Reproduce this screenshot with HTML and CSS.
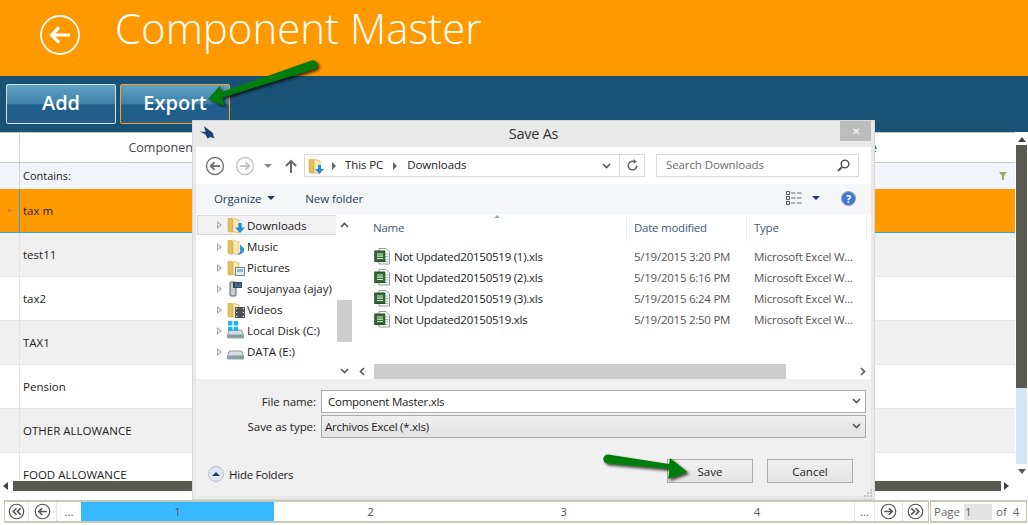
FILE: index.html
```html
<!DOCTYPE html>
<html lang="en">
<head>
<meta charset="utf-8">
<title>Component Master</title>
<link rel="stylesheet" href="styles.css">
</head>
<body>
<svg class="defs" width="0" height="0">
  <defs>
    <symbol id="folder" viewBox="0 0 16 16">
      <path d="M1 1.500h4l1 1v12.500H2l-1-1z" fill="#e2bf5c" stroke="#c9a84a" stroke-width=".6"/>
      <path d="M6 1 12 3v12.500l-6-.5z" fill="#f8e8ae" stroke="#d0b057" stroke-width=".6"/>
    </symbol>
    <symbol id="xls" viewBox="0 0 17 17">
      <path d="M5 .5h7l3.500 3.500v12H5z" fill="#fff" stroke="#8f9a9a"/>
      <path d="M11 6h3.500M11 8.500h3.500M11 11h3.500M11 13.500h3.500" stroke="#9aa" stroke-width=".8"/>
      <rect x=".8" y="3" width="10" height="10.500" fill="#2f6b2f" stroke="#1f4d1f"/>
      <path d="M3 6h6M3 8.200h6M3 10.500h6" stroke="#dfeedd" stroke-width="1.200"/>
    </symbol>
    <symbol id="disk" viewBox="0 0 17 10">
      <path d="M2.500 1h12L16.500 6v3H.5V6z" fill="#d8dde2" stroke="#80878c" stroke-width=".8"/>
      <rect x="1" y="5.500" width="15" height="3.200" fill="#8a9aa4"/>
      <rect x="12" y="6.300" width="2.500" height="1.500" fill="#4fc04f"/>
    </symbol>
    <symbol id="circleL" viewBox="0 0 20 20">
      <circle cx="10" cy="10" r="8.500" fill="#fff" stroke="currentColor" stroke-width="1.400"/>
      <path d="M15 10H6M9.500 6.200 5.700 10l3.800 3.800" fill="none" stroke="currentColor" stroke-width="2"/>
    </symbol>
    <symbol id="circleR" viewBox="0 0 20 20">
      <circle cx="10" cy="10" r="8.500" fill="#fff" stroke="currentColor" stroke-width="1.400"/>
      <path d="M5 10h9M10.500 6.200l3.800 3.800-3.800 3.800" fill="none" stroke="currentColor" stroke-width="2"/>
    </symbol>
    <symbol id="circleLL" viewBox="0 0 20 20">
      <circle cx="10" cy="10" r="8.500" fill="#fff" stroke="currentColor" stroke-width="1.400"/>
      <path d="M10 6.200 6.200 10l3.800 3.800M15 6.200 11.200 10l3.800 3.800" fill="none" stroke="currentColor" stroke-width="2"/>
    </symbol>
    <symbol id="circleRR" viewBox="0 0 20 20">
      <circle cx="10" cy="10" r="8.500" fill="#fff" stroke="currentColor" stroke-width="1.400"/>
      <path d="M5 6.200 8.800 10 5 13.800M10 6.200l3.800 3.800-3.800 3.800" fill="none" stroke="currentColor" stroke-width="2"/>
    </symbol>
  </defs>
</svg>

<header class="top">
  <svg class="back" width="40" height="40" viewBox="0 0 40 40"><circle cx="20" cy="20" r="19" fill="none" stroke="#fff" stroke-width="1.800"/><path d="M30 20H11M19 12.500 11.500 20l7.500 7.500" fill="none" stroke="#fff" stroke-width="3.200"/></svg>
  <h1 class="title">Component Master</h1>
</header>

<nav class="bar">
  <button class="tbtn">Add</button>
  <button class="tbtn tbtn-on">Export</button>
</nav>

<section class="grid">
  <div class="grid-main">
    <div class="ghead">
      <div class="gi"></div>
      <div class="gh c1">Component Name</div>
      <div class="gh c2">Description</div>
      <div class="gh c3">Component Type</div>
    </div>
    <div class="gfilter">
      <div class="gi"></div>
      <div class="fcell">Contains:</div>
      <svg class="funnel" width="8" height="8" viewBox="0 0 8 8"><path d="M0 0h8L5 4v4H3V4z" fill="#9aa86a"/></svg>
    </div>
    <div class="grows">
      <div class="row sel"><div class="gi"><span class="dot"></span></div><div class="cell">tax m</div></div>
      <div class="row alt"><div class="gi"></div><div class="cell">test11</div></div>
      <div class="row"><div class="gi"></div><div class="cell">tax2</div></div>
      <div class="row alt"><div class="gi"></div><div class="cell">TAX1</div></div>
      <div class="row"><div class="gi"></div><div class="cell">Pension</div></div>
      <div class="row alt"><div class="gi"></div><div class="cell">OTHER ALLOWANCE</div></div>
      <div class="row"><div class="gi"></div><div class="cell">FOOD ALLOWANCE</div></div>
    </div>
    <div class="hscroll">
      <span class="tri tri-l"></span>
      <div class="hthumb"></div>
      <span class="tri tri-r"></span>
    </div>
  </div>
  <div class="vscroll">
    <span class="tri tri-u"></span>
    <div class="vthumb"></div>
    <div class="vtrack"></div>
    <span class="tri tri-d"></span>
  </div>
</section>

<footer class="pager">
  <div class="pages">
    <div class="pg pg-first"><svg class="pic" width="17" height="17"><use href="#circleLL"/></svg></div>
    <div class="pg pg-i"><svg class="pic" width="17" height="17"><use href="#circleL"/></svg></div>
    <div class="pg pg-m">...</div>
    <div class="pg pg-n on">1</div>
    <div class="pg pg-n">2</div>
    <div class="pg pg-n">3</div>
    <div class="pg pg-n pg-edge">4</div>
    <div class="pg pg-m2">...</div>
    <div class="pg pg-i"><svg class="pic" width="17" height="17"><use href="#circleR"/></svg></div>
    <div class="pg pg-last"><svg class="pic" width="17" height="17"><use href="#circleRR"/></svg></div>
  </div>
  <div class="pageinfo"><span>Page</span><span class="pinput">1</span><span>of</span><span class="ptotal">4</span></div>
</footer>

<div class="dialog">
  <div class="dtitle">
    <svg class="bird" width="17" height="15" viewBox="0 0 17 15"><path d="M1 6.500 6.500 7 5 1l5 4 4 3 .5 3 1 2.500-4-1.500-3 1.500-2-4z" fill="#1f3f77"/></svg>
    <span class="dtext">Save As</span>
    <span class="close">✕</span>
  </div>
  <div class="dinner">
    <div class="dnav">
      <svg class="nav-back" width="20" height="20"><use href="#circleL"/></svg>
      <svg class="nav-fwd" width="20" height="20"><use href="#circleR"/></svg>
      <span class="tri tri-hist"></span>
      <svg class="nav-up" width="12" height="14" viewBox="0 0 12 14"><path d="M6 14V2M1 7l5-5 5 5" fill="none" stroke="#6a6a6a" stroke-width="2"/></svg>
      <div class="addr">
        <svg class="ic16" width="16" height="16"><use href="#folder"/></svg>
        <svg class="ovarrow" width="9" height="9" viewBox="0 0 9 9"><path d="M3 0h3v4h3L4.500 9 0 4h3z" fill="#1f8fe8"/></svg>
        <span class="tri tri-crumb"></span>
        <span class="crumb">This PC</span>
        <span class="tri tri-crumb"></span>
        <span class="crumb">Downloads</span>
        <span class="grow"></span>
        <svg class="chev" width="9" height="6" viewBox="0 0 9 6"><path d="M1 1l3.500 3.500L8 1" fill="none" stroke="#555" stroke-width="1.600"/></svg>
        <span class="refresh"><svg width="13" height="13" viewBox="0 0 13 13"><path d="M10.800 6.500a4.300 4.300 0 1 1-2-3.600" fill="none" stroke="#666" stroke-width="1.500"/><path d="M7.500 0l3.500 2.800-3.500 1.700z" fill="#666"/></svg></span>
      </div>
      <div class="search">
        <span>Search Downloads</span>
        <svg width="13" height="13" viewBox="0 0 13 13"><circle cx="8" cy="5" r="3.800" fill="none" stroke="#555" stroke-width="1.500"/><path d="M5 8l-4 4" stroke="#555" stroke-width="2"/></svg>
      </div>
    </div>
    <div class="dtools">
      <span class="org">Organize</span><span class="tri tri-tool"></span>
      <span class="newf">New folder</span>
      <span class="grow"></span>
      <svg class="views" width="16" height="14" viewBox="0 0 16 14"><path d="M.5.500h3v3h-3zM.5 5.500h3v3h-3zM.5 10.500h3v3h-3z" fill="none" stroke="#4a5a70"/><path d="M5 2h4.500M11 2h4.500M5 7h4.500M11 7h4.500M5 12h4.500M11 12h4.500" stroke="#5a6a80"/></svg>
      <span class="tri tri-tool tri-views"></span>
      <svg class="help" width="15" height="15" viewBox="0 0 15 15"><circle cx="7.500" cy="7.500" r="7" fill="#3f78d0" stroke="#8aa0c0"/><text x="7.500" y="11.500" text-anchor="middle" class="helpq">?</text></svg>
    </div>
    <div class="dbody">
      <div class="tree">
        <div class="tlist">
          <div class="ti ti-sel"><span class="exp"></span><span class="ticon"><svg width="16" height="16"><use href="#folder"/></svg><svg class="ovarrow2" width="10" height="10" viewBox="0 0 9 9"><path d="M3 0h3v4h3L4.500 9 0 4h3z" fill="#1f8fe8"/></svg></span>Downloads</div>
          <div class="ti"><span class="exp"></span><span class="ticon"><svg width="16" height="16"><use href="#folder"/></svg><svg class="ovarrow2" width="9" height="11" viewBox="0 0 9 11"><path d="M4 0c1 3 5 3 4 7-1 3-5 4-7 3 2 0 4-2 3-5z" fill="#2f8fd8"/></svg></span>Music</div>
          <div class="ti"><span class="exp"></span><span class="ticon"><svg width="16" height="16"><use href="#folder"/></svg><svg class="ovarrow2" width="10" height="9" viewBox="0 0 10 9"><rect x=".5" y=".5" width="9" height="8" fill="#dfeaf2" stroke="#7a8a90"/><rect x="2" y="2" width="6" height="3" fill="#8fb8d0"/></svg></span>Pictures</div>
          <div class="ti"><span class="exp"></span><span class="ticon"><svg width="16" height="16" viewBox="0 0 16 16"><rect x="3" y="1" width="6" height="14" rx="1" fill="#c8ccd0" stroke="#5a6066"/><path d="M6 1h9v6H6z" fill="#3a4a55"/><path d="M8 3h2M12 3h2M8 5h6" stroke="#3fa0e0"/></svg></span>soujanyaa (ajay)</div>
          <div class="ti"><span class="exp"></span><span class="ticon"><svg width="16" height="16"><use href="#folder"/></svg><svg class="ovarrow2" width="10" height="11" viewBox="0 0 9 10"><rect width="9" height="10" fill="#4a5258"/><path d="M1 1.500h1M1 5h1M1 8.500h1M7 1.500h1M7 5h1M7 8.500h1" stroke="#fff"/></svg></span>Videos</div>
          <div class="ti"><span class="exp"></span><span class="ticon"><svg width="17" height="10" class="dsk"><use href="#disk"/></svg><svg class="win" width="10" height="10" viewBox="0 0 8 8"><path d="M0 0h3.500v3.500H0zM4.500 0H8v3.500H4.500zM0 4.500h3.500V8H0zM4.500 4.500H8V8H4.500z" fill="#19b5f0"/></svg></span>Local Disk (C:)</div>
          <div class="ti"><span class="exp"></span><span class="ticon"><svg width="17" height="10" class="dsk"><use href="#disk"/></svg></span>DATA (E:)</div>
        </div>
        <div class="tscroll">
          <svg class="sc-u" width="9" height="6" viewBox="0 0 9 6"><path d="M1 5l3.500-3.500L8 5" fill="none" stroke="#555" stroke-width="1.600"/></svg>
          <div class="tthumb"></div>
          <svg class="sc-d" width="9" height="6" viewBox="0 0 9 6"><path d="M1 1l3.500 3.500L8 1" fill="none" stroke="#555" stroke-width="1.600"/></svg>
        </div>
      </div>
      <div class="files">
        <div class="fhead">
          <span class="fh fh-name">Name</span><span class="fh fh-date">Date modified</span><span class="fh fh-type">Type</span>
          <span class="sortmark"></span>
        </div>
        <div class="flist">
          <div class="fr"><svg class="fi" width="17" height="17"><use href="#xls"/></svg><span class="fn">Not Updated20150519 (1).xls</span><span class="fd">5/19/2015 3:20 PM</span><span class="ft">Microsoft Excel W...</span></div>
          <div class="fr"><svg class="fi" width="17" height="17"><use href="#xls"/></svg><span class="fn">Not Updated20150519 (2).xls</span><span class="fd">5/19/2015 6:16 PM</span><span class="ft">Microsoft Excel W...</span></div>
          <div class="fr"><svg class="fi" width="17" height="17"><use href="#xls"/></svg><span class="fn">Not Updated20150519 (3).xls</span><span class="fd">5/19/2015 6:24 PM</span><span class="ft">Microsoft Excel W...</span></div>
          <div class="fr"><svg class="fi" width="17" height="17"><use href="#xls"/></svg><span class="fn">Not Updated20150519.xls</span><span class="fd">5/19/2015 2:50 PM</span><span class="ft">Microsoft Excel W...</span></div>
        </div>
        <div class="lscroll">
          <svg class="sc-h" width="6" height="9" viewBox="0 0 6 9"><path d="M5 1 1.500 4.500 5 8" fill="none" stroke="#555" stroke-width="1.600"/></svg>
          <div class="lthumb"></div>
          <svg class="sc-h" width="6" height="9" viewBox="0 0 6 9"><path d="M1 1l3.500 3.500L1 8" fill="none" stroke="#555" stroke-width="1.600"/></svg>
        </div>
      </div>
    </div>
    <div class="dform">
      <div class="frow">
        <label class="flabel">File name:</label>
        <div class="finput"><span>Component Master.xls</span><svg width="9" height="6" viewBox="0 0 9 6"><path d="M1 1l3.500 3.500L8 1" fill="none" stroke="#555" stroke-width="1.600"/></svg></div>
      </div>
      <div class="frow">
        <label class="flabel">Save as type:</label>
        <div class="finput fselect"><span>Archivos Excel (*.xls)</span><svg width="9" height="6" viewBox="0 0 9 6"><path d="M1 1l3.500 3.500L8 1" fill="none" stroke="#555" stroke-width="1.600"/></svg></div>
      </div>
      <div class="dfoot">
        <span class="hideic"><span class="tri tri-hide"></span></span>
        <span class="hidetxt">Hide Folders</span>
        <span class="grow"></span>
        <button class="dbtn">Save</button>
        <button class="dbtn">Cancel</button>
      </div>
    </div>
  </div>
  <svg class="grip" width="9" height="9" viewBox="0 0 9 9"><path d="M6 0h2v2H6zM3 3h2v2H3zM6 3h2v2H6zM0 6h2v2H0zM3 6h2v2H3zM6 6h2v2H6z" fill="#c4c4c4"/></svg>
</div>

<svg class="annot" width="1028" height="525" viewBox="0 0 1028 525">
  <defs>
    <filter id="sh" x="-20%" y="-50%" width="140%" height="200%"><feDropShadow dx="2" dy="2" stdDeviation="1.500" flood-color="#000" flood-opacity=".75"/></filter>
  </defs>
  <g filter="url(#sh)" fill="#047d0b">
    <path d="M311.500 60.500a4.500 4.500 0 0 1 3 8.500L222 97.500l2 8-16-6.500 12-13.500 1.500 6.500z"/>
    <path d="M608 454.500a4.500 4.500 0 0 0-.5 9l62 5.500-1.500 10 19.500-7-17.500-14-1 6z"/>
  </g>
</svg>
</body>
</html>
```

FILE: styles.css
```css
* { box-sizing: border-box; }
html, body { margin: 0; padding: 0; }
body {
  width: 1028px;
  height: 525px;
  overflow: hidden;
  background: #fff;
  font-family: "Open Sans", "Liberation Sans", sans-serif;
  font-size: 11.500px;
  color: #1c1c1c;
  position: relative;
}
.defs { position: absolute; }
.grow { flex: 1; }

.top { height: 76px; background: #ff9900; display: flex; align-items: flex-start; }
.back { margin: 15px 0 0 40px; }
.title { margin: 0 0 0 35px; font-size: 42px; line-height: 56px; font-weight: 300; color: #fff; white-space: nowrap; }

.bar { height: 56px; background: #1a5276; display: flex; gap: 4px; padding: 8px 0 0 6px; }
.tbtn {
  width: 110px; height: 40px; border: 1px solid #d8e4ea; border-radius: 2px; color: #fff;
  font: 600 20px "Open Sans", sans-serif;
  background: linear-gradient(#5fa3c4 0, #3f7fa8 50%, #1f5f8b 52%, #235f8a 100%);
  padding: 0 0 3px;
}
.tbtn-on { border-color: #ff9f1a; }

.grid { height: 366px; display: flex; }
.grid-main { width: 1015px; display: flex; flex-direction: column; padding-left: 0; }
.ghead { height: 31px; display: flex; border-top: 1px solid #c9c9ba; border-bottom: 1px solid #c9c9ba; }
.gi { width: 20px; flex: none; border-right: 1px solid #d4d4c8; display: flex; align-items: center; justify-content: center; }
.gh { display: flex; align-items: center; justify-content: center; font-size: 12.500px; color: #444; }
.c1 { width: 324px; }
.c2 { width: 296px; }
.c3 { width: 374px; }
.gfilter { height: 26px; background: #f1f5fb; display: flex; align-items: center; }
.gfilter .gi { height: 100%; }
.fcell { padding: 0 0 1px 3px; font-size: 11px; color: #1c1c1c; flex: 1; }
.funnel { margin-right: 8px; }
.grows { height: 291px; overflow: hidden; flex: none; }
.row { height: 44px; display: flex; border-bottom: 1px solid #e6e6e6; }
.row .gi { border-right-color: #e4e4e4; }
.alt { background: #f0f0f0; }
.sel { background: #ff9900; border-bottom: 1px solid #3aa0d8; }
.sel .gi { border-right-color: #3aa0d8; }
.dot { width: 3px; height: 3px; background: #c88a20; }
.cell { padding-left: 3px; display: flex; align-items: center; font-size: 11.500px; color: #222; }
.hscroll { height: 12px; margin-top: 0; display: flex; align-items: center; gap: 3px; padding: 0 3px; }
.hthumb { width: 988px; height: 10px; background: #5a5a52; margin-left: 2px; }
.vscroll { width: 13px; display: flex; flex-direction: column; align-items: center; padding-top: 4px; }
.vthumb { width: 11px; height: 243px; margin-top: 3px; background: #5a5a52; }
.vtrack { width: 11px; height: 76px; background: #d2e8f6; }
.tri { width: 0; height: 0; border-style: solid; border-color: transparent; display: inline-block; flex: none; }
.tri-u { border-width: 0 4px 5px; border-bottom-color: #444; margin-top: 1px; }
.tri-d { border-width: 5px 4px 0; border-top-color: #5a5a52; margin-top: 5px; }
.tri-l { border-width: 4px 5px 4px 0; border-right-color: #444; }
.tri-r { border-width: 4px 0 4px 5px; border-left-color: #444; }

.pager { height: 27px; display: flex; gap: 1px; padding: 2px 0 2px 4px; }
.pages { width: 925px; display: flex; border: 1px solid #c9c9ba; border-width: 2px 1px; }
.pg { display: flex; align-items: center; justify-content: center; color: #555; flex: none; font-size: 11.500px; }
.pg-first { width: 24px; border-right: 1px dotted #b5dcf2; color: #555; }
.pg-i { width: 28px; border-right: 1px dotted #b5dcf2; color: #555; }
.pg-last { width: 25px; color: #555; }
.pg-m { width: 24px; }
.pg-m2 { width: 21px; border-left: 1px dotted #b5dcf2; border-right: 1px dotted #b5dcf2; }
.pg-n { width: 193px; }
.pg-edge { width: 194px; }
.pg-n.on { background: #38b9ff; }
.pageinfo { flex: 1; margin-right: 1px; display: flex; align-items: center; gap: 4px; padding-left: 3px; border: 1px solid #c9c9ba; border-width: 2px 1px; color: #666; font-size: 11.500px; }
.pinput { width: 28px; height: 16px; line-height: 16px; background: #e4e4e4; padding-left: 1px; }
.ptotal { margin-left: 2px; }

.dialog {
  position: absolute; left: 192px; top: 120px; width: 683px; height: 380px;
  background: #e9e9e9; border: 1px solid #d9d9d9; display: flex; flex-direction: column; padding: 0 3px 3px;
  letter-spacing: -.25px;
}
.dtitle { height: 26px; flex: none; display: flex; align-items: flex-start; justify-content: center; position: relative; }
.bird { position: absolute; left: 3px; top: 4px; }
.dtext { font-size: 14.500px; line-height: 25px; color: #333; }
.close { position: absolute; right: 0; top: 0; width: 31px; height: 20px; background: #bdbdbd; color: #fff; text-align: center; font-size: 10px; line-height: 20px; }
.dinner { flex: 1; display: flex; flex-direction: column; background: #f0f0f0; }
.dnav { height: 37px; flex: none; background: #fff; display: flex; align-items: center; padding-left: 9px; }
.nav-back { color: #757575; }
.nav-fwd { color: #c4c4c4; margin-left: 10px; }
.tri-hist { border-width: 4px 4px 0; border-top-color: #888; margin-left: 9px; }
.nav-up { margin-left: 13px; }
.addr { width: 341px; height: 23px; margin-left: 7px; border: 1px solid #d9d9d9; display: flex; align-items: center; padding-left: 3px; position: relative; color: #222; letter-spacing: -.1px; }
.addr span, .search span { position: relative; top: -1px; }
.addr .tri, .addr .refresh { top: 0; }
.ovarrow { position: absolute; left: 10px; top: 10px; }
.tri-crumb { border-width: 4px 0 4px 4px; border-left-color: #666; margin: 0 9px 0 8px; }
.crumb { margin-right: 1px; }
.crumb + .tri-crumb { margin-left: 9px; margin-right: 10px; }
.chev { margin-right: 8px; }
.refresh { width: 25px; height: 100%; border-left: 1px solid #d9d9d9; display: flex; align-items: center; justify-content: center; }
.search { width: 203px; height: 23px; margin-left: 11px; border: 1px solid #d9d9d9; padding: 0 8px 0 9px; display: flex; align-items: center; justify-content: space-between; color: #6d6d6d; letter-spacing: -.1px; }
.dtools { height: 30px; flex: none; background: #f5f6f7; display: flex; align-items: center; padding: 0 0 2px 18px; color: #1e3a66; letter-spacing: -.1px; }
.tri-tool { border-width: 4px 4px 0; border-top-color: #1e3a66; margin-left: 6px; }
.newf { margin-left: 30px; }
.views { margin-right: 10px; }
.tri-views { margin: 0 21px 0 0; }
.help { margin-right: 15px; }
.helpq { font: 700 11px "Open Sans", sans-serif; fill: #fff; }
.dbody { height: 165px; flex: none; background: #fff; display: flex; }
.tree { width: 157px; flex: none; display: flex; }
.tlist { width: 141px; padding: 1px 0 0 1px; }
.ti { height: 21px; display: flex; align-items: center; white-space: nowrap; color: #1c1c1c; letter-spacing: -.05px; }
.ti-sel { height: 20px; margin-bottom: 1px; background: #f2f2f2; border: 1px solid #d9d9d9; margin-right: 0; }
.exp { width: 0; height: 0; margin: 0 5px 0 20px; border-style: solid; border-width: 4px 0 4px 5px; border-color: transparent transparent transparent #a8a8a8; flex: none; position: relative; }
.exp::after { content: ""; position: absolute; left: -4px; top: -2px; width: 0; height: 0; border-style: solid; border-width: 2px 0 2px 2.500px; border-color: transparent transparent transparent #fff; }
.ti-sel .exp { margin-left: 19px; }
.ti-sel .exp::after { border-left-color: #f2f2f2; }
.ticon { width: 17px; height: 16px; margin-right: 3px; position: relative; flex: none; display: block; }
.ovarrow2 { position: absolute; right: -1px; bottom: 0; }
.dsk { position: absolute; left: 0; top: 6px; }
.win { position: absolute; left: 1px; top: -2px; }
.tscroll { width: 16px; flex: none; margin-left: -1px; background: #fff; display: flex; flex-direction: column; align-items: center; padding-top: 8px; }
.tthumb { width: 15px; height: 42px; background: #cdcdcd; margin-top: 72px; }
.sc-d { margin-top: 26px; }
.files { flex: 1; display: flex; flex-direction: column; padding-left: 5px; min-width: 0; }
.fhead { height: 27px; flex: none; display: flex; position: relative; color: #44587a; align-items: center; }
.fh { height: 100%; display: flex; align-items: center; padding-left: 7px; border-right: 1px solid #eaeef2; flex: none; }
.fh-name { width: 269px; padding-left: 15px; }
.fh-date { width: 120px; }
.fh-type { width: 120px; }
.sortmark { position: absolute; left: 136px; top: 1px; width: 0; height: 0; border-style: solid; border-width: 0 3px 3px; border-color: transparent transparent #8ab4d4; }
.flist { height: 123px; flex: none; padding-top: 5px; overflow: hidden; }
.fr { height: 21px; display: flex; align-items: center; white-space: nowrap; }
.fi { margin-left: 16px; flex: none; }
.fn { width: 240px; margin-left: 3px; color: #1c1c1c; }
.fd { width: 120px; color: #555; }
.ft { color: #555; }
.lscroll { height: 15px; flex: none; display: flex; align-items: center; margin-right: 4px; padding-left: 1px; }
.lthumb { width: 412px; height: 15px; background: #cdcdcd; margin: 0 74px 0 9px; }
.dform { flex: 1; padding-top: 11px; position: relative; }
.frow { height: 22px; margin-bottom: 3px; display: flex; align-items: center; }
.flabel { width: 120px; text-align: right; margin-right: 5px; color: #1c1c1c; letter-spacing: -.05px; }
.finput { width: 545px; height: 23px; background: #fff; border: 1px solid #acacac; display: flex; align-items: center; justify-content: space-between; padding: 0 4px 0 6px; color: #1c1c1c; }
.fselect { background: linear-gradient(#f0f0f0, #e2e2e2); padding-left: 3px; }
.dfoot { display: flex; align-items: center; height: 24px; margin-top: 22px; padding-left: 12px; }
.hideic { width: 16px; height: 16px; border-radius: 50%; background: #dfe6f0; border: 1px solid #b8c0cc; display: flex; align-items: center; justify-content: center; position: relative; top: 3px; }
.tri-hide { border-width: 0 4px 4px; border-bottom-color: #1f3f77; }
.hidetxt { margin-left: 5px; color: #1c1c1c; position: relative; top: 3px; }
.dbtn { width: 86px; height: 24px; border: 1px solid #acacac; background: linear-gradient(#f0f0f0, #e4e4e4); font: 11.500px "Open Sans", sans-serif; color: #1c1c1c; padding: 0; margin-right: 14px; }
.dbtn:last-child { margin-right: 18px; }
.grip { position: absolute; right: 1px; bottom: 1px; }

.annot { position: absolute; left: 0; top: 0; pointer-events: none; }
```
